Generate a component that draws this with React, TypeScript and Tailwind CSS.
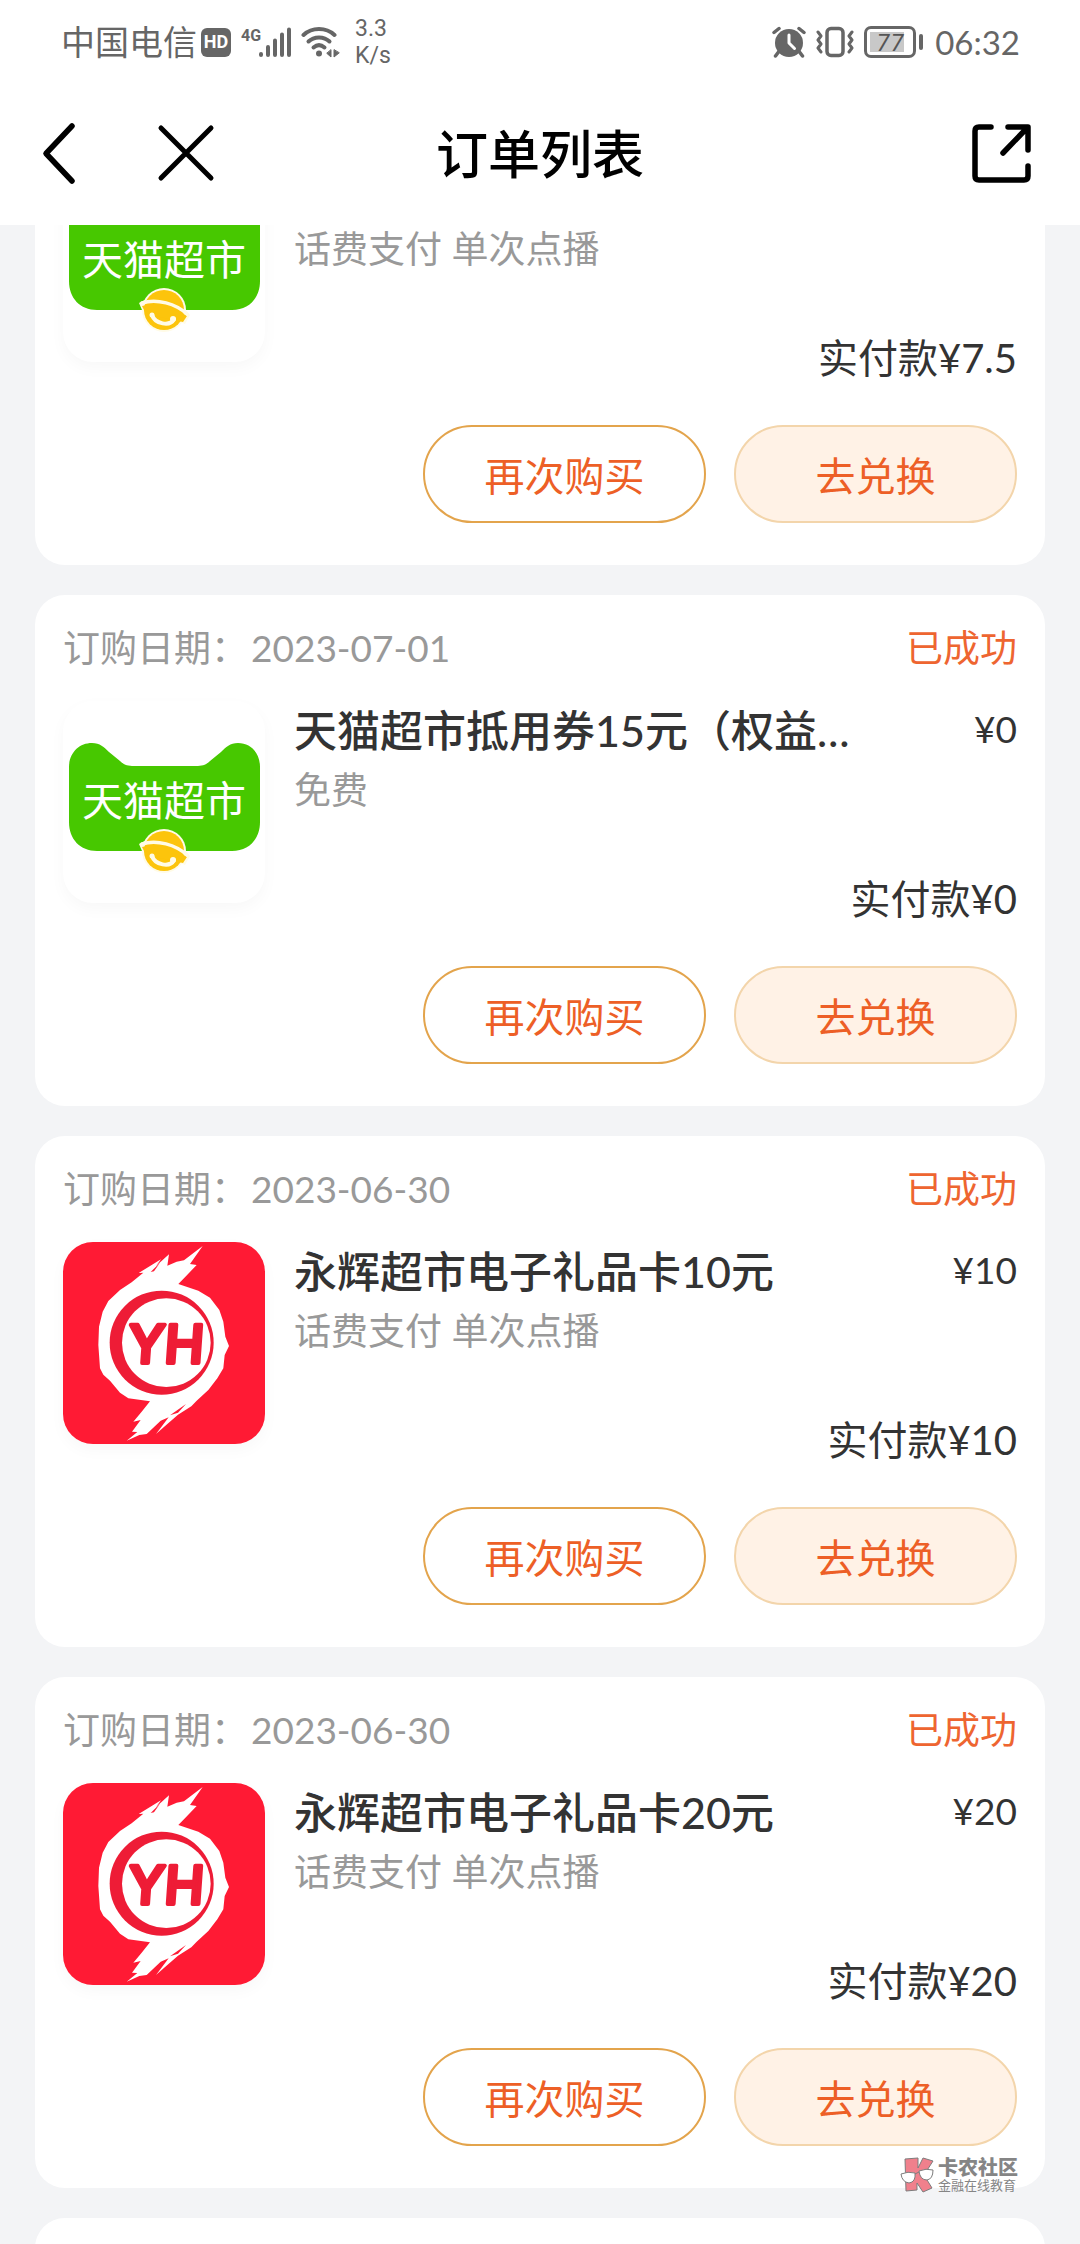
type Brand = 'tmall' | 'yonghui';

interface Order {
  id: string;
  date?: string;
  status?: string;
  brand: Brand;
  title?: string;
  note?: string;
  price?: string;
  paid?: string;
}

const orders: Order[] = [
  { id: 'a', brand: 'tmall', note: '话费支付 单次点播', paid: '7.5' },
  { id: 'b', date: '2023-07-01', status: '已成功', brand: 'tmall', title: '天猫超市抵用券15元（权益…', note: '免费', price: '0', paid: '0' },
  { id: 'c', date: '2023-06-30', status: '已成功', brand: 'yonghui', title: '永辉超市电子礼品卡10元', note: '话费支付 单次点播', price: '10', paid: '10' },
  { id: 'd', date: '2023-06-30', status: '已成功', brand: 'yonghui', title: '永辉超市电子礼品卡20元', note: '话费支付 单次点播', price: '20', paid: '20' },
];

function TmallLogo() {
  return (
    <svg viewBox="0 0 202 202" className="size-full" role="img" aria-label="天猫超市">
      <path
        d="M6 66C6 52 16 42 29 42C37 42 41 46 46 51L57 60C61 64 65 65 71 65H133C139 65 143 64 147 60L158 51C163 46 167 42 175 42C188 42 197 52 197 66V121C197 138 186 150 169 150H34C17 150 6 138 6 121Z"
        fill="#47c800"
      />
      <text x="101" y="115" textAnchor="middle" fontSize="41" fontWeight="400" fill="#fff">
        天猫超市
      </text>
      <circle cx="101" cy="150" r="22" fill="#fffbe6" />
      <path d="M76 143C92 132 116 139 127 155L122 164C105 156 92 152 79 150Z" fill="#fffbe6" />
      <circle cx="101" cy="150" r="20" fill="#fcc40c" />
      <path d="M79 146C94 142 112 148 124 156L120 162L83 154Z" fill="#fcc40c" />
      <path d="M79 143C94 138 113 144 124 154" fill="none" stroke="#fffbe6" strokeWidth="3.500" strokeLinecap="round" />
      <path d="M89 155C92 164 107 167 111 159" fill="none" stroke="#fffbe6" strokeWidth="4" strokeLinecap="round" />
      <circle cx="89" cy="155" r="2.500" fill="#fffbe6" />
      <circle cx="110" cy="159" r="3" fill="#fffbe6" />
    </svg>
  );
}

function YonghuiLogo() {
  return (
    <svg viewBox="39 36 606 606" className="size-full" role="img" aria-label="永辉超市">
      <rect x="39" y="36" width="606" height="606" fill="#ff1a34" />
      <path
        d="M458 48L402 91L380 95L352 107L357 73L318 108L333 88L266 129L280 128L245 157L210 180L175 213L158 245L147 290L145 345L150 415L160 434L180 452L210 488L235 505L300 514L275 545L250 575L272 570L246 605L262 606L230 632L268 615L290 612L332 572L356 562L318 612L352 582L384 554L424 529L440 512L475 480L502 445L520 415L524 375L537 348L526 320L520 275L508 240L480 203L445 182L385 162L412 134L440 105L420 102Z"
        fill="#fff"
      />
      <path d="M360 556L408 522L384 548ZM330 98L312 124L302 126Z" fill="#ff1a34" />
      <circle cx="335" cy="338" r="156" fill="#ee1c36" />
      <circle cx="349" cy="338" r="133" fill="#fff" />
      <g transform="translate(344 399) skewX(-4)">
        <text
          textAnchor="middle"
          fontFamily="Inter"
          fontWeight="500"
          fontSize="158"
          fill="#ee1c36"
          stroke="#ee1c36"
          strokeWidth="12"
          strokeLinejoin="round"
        >
          YH
        </text>
      </g>
    </svg>
  );
}

function StatusBar() {
  return (
    <div className="flex h-[84px] items-center justify-between pr-[60px] pl-[61px] text-[#666]">
      <div className="flex items-center">
        <span className="text-[34px] leading-[40px]">中国电信</span>
        <span className="ml-[4px] flex h-[29px] w-[30px] items-center justify-center rounded-[6px] bg-[#666] font-[Roboto] text-[18px] leading-none font-bold text-white">
          HD
        </span>
        <svg viewBox="0 0 52 32" className="ml-[10px] h-[32px] w-[52px]" role="img" aria-label="4G">
          <text x="0" y="15" fontFamily="Roboto" fontSize="16" fontWeight="700" fill="#666">
            4G
          </text>
          <g stroke="#666" strokeWidth="4" strokeLinecap="round">
            <path d="M20 28V29M27 21V29M34 14.500V29M41 8.500V29M48 3.500V29" />
          </g>
        </svg>
        <svg viewBox="0 0 40 32" className="ml-[8px] h-[32px] w-[40px]" fill="none" stroke="#666" strokeLinecap="round" aria-hidden="true">
          <path d="M2.500 9C11 1 25 1 33.500 9" strokeWidth="4" />
          <path d="M7.500 15.500C13 10 23 10 28.500 15.500" strokeWidth="4" />
          <path d="M12.500 21.500C16 18.500 20 18.500 23.500 21.500" strokeWidth="4" />
          <circle cx="18" cy="27.500" r="3" fill="#666" stroke="none" />
          <path d="M30 24V31L26 27.500ZM33 24V31L38 27Z" fill="#666" stroke="#666" strokeWidth="1" />
        </svg>
        <span className="ml-[14px] flex flex-col font-[Roboto] text-[23px] leading-[27px]">
          <span>3.3</span>
          <span>K/s</span>
        </span>
      </div>
      <div className="flex items-center">
        <svg viewBox="0 0 34 32" className="h-[32px] w-[34px]" aria-hidden="true">
          <circle cx="17" cy="17" r="14" fill="#666" />
          <path d="M2 6.500L7 2.500M32 6.500L27 2.500M6.500 26L3.500 30M27.500 26L30.500 30" stroke="#666" strokeWidth="3.500" strokeLinecap="round" />
          <path d="M17 9V17L22.500 22.500" stroke="#fff" strokeWidth="3" fill="none" strokeLinecap="round" strokeLinejoin="round" />
        </svg>
        <svg viewBox="0 0 38 32" className="ml-[10px] h-[32px] w-[38px]" fill="none" stroke="#666" strokeWidth="3.500" aria-hidden="true">
          <rect x="11" y="2.500" width="16" height="27" rx="4" />
          <path d="M2 6L5 10L2 14L5 18L2 22L5 26M36 6L33 10L36 14L33 18L36 22L33 26" strokeLinejoin="round" strokeLinecap="round" strokeWidth="3" />
        </svg>
        <span className="ml-[10px] flex h-[32px] w-[52px] rounded-[7px] border-[3px] border-[#666] p-[3px]">
          <span className="flex w-[34px] items-center justify-end bg-[#c8c8c8] text-[24px] leading-none text-[#555] italic">77</span>
        </span>
        <span className="ml-[3px] h-[16px] w-[4px] rounded-[2px] bg-[#666]" />
        <time className="ml-[12px] text-[33px] leading-[40px]">06:32</time>
      </div>
    </div>
  );
}

function NavBar() {
  return (
    <header className="grid h-[141px] grid-cols-[1fr_auto_1fr] items-center px-[40px] pb-[2px]">
      <div className="flex items-center">
        <button type="button" aria-label="返回" className="h-[64px] w-[40px]">
          <svg viewBox="0 0 40 64" fill="none" stroke="#000" strokeWidth="5.500" strokeLinecap="round" strokeLinejoin="round">
            <path d="M32 4L6 31.500L32 59" />
          </svg>
        </button>
        <button type="button" aria-label="关闭" className="ml-[74px] h-[64px] w-[64px]">
          <svg viewBox="0 0 64 64" fill="none" stroke="#000" strokeWidth="5" strokeLinecap="round">
            <path d="M7 6L57 56M57 6L7 56" />
          </svg>
        </button>
      </div>
      <h1 className="text-[52px] leading-[60px] font-medium text-black">订单列表</h1>
      <button type="button" aria-label="分享" className="mr-[7px] h-[64px] w-[64px] justify-self-end">
        <svg viewBox="0 0 64 64" fill="none" stroke="#000" strokeWidth="5.500" strokeLinecap="round" strokeLinejoin="round">
          <path d="M22 5H10Q6 5 6 9V54Q6 58 10 58H55Q59 58 59 54V44M39 5H59V28M58 6L34 31" />
        </svg>
      </button>
    </header>
  );
}

function OrderCard({ order }: { order: Order }) {
  return (
    <article className="shrink-0 rounded-[30px] bg-white px-[28px] pb-[42px]">
      <div className="flex h-[106px] items-center justify-between text-[37px] text-[#999]">
        {order.date && (
          <p>
            订购日期：<time className="ml-[3px]">{order.date}</time>
          </p>
        )}
        {order.status && <p className="text-[#ee6530]">{order.status}</p>}
      </div>
      <div className="flex gap-[29px]">
        <div className="size-[202px] shrink-0 overflow-hidden rounded-[30px] bg-white shadow-[0_6px_16px_rgba(0,0,0,0.03)]">
          {order.brand === 'tmall' ? <TmallLogo /> : <YonghuiLogo />}
        </div>
        <div className="min-w-0 flex-1 text-[#333]">
          <div className="flex h-[60px] items-center justify-between">
            {order.title && <h2 className="truncate text-[43px] leading-[60px] font-medium">{order.title}</h2>}
            {order.price && <span className="pb-[4px] text-[37px]">¥{order.price}</span>}
          </div>
          <p className="text-[37px] leading-[58px] text-[#999]">{order.note}</p>
          <p className="mt-[50px] text-right text-[40px] leading-[60px]">实付款¥{order.paid}</p>
        </div>
      </div>
      <div className="mt-[37px] flex justify-end gap-[28px] text-[40px] text-[#ed5f26]">
        <button type="button" className="h-[98px] w-[283px] rounded-full border-2 border-[#e3a44c] pt-[3px]">
          再次购买
        </button>
        <button type="button" className="h-[98px] w-[283px] rounded-full border-2 border-[#f3d5ab] bg-[#fff2e6] pt-[3px]">
          去兑换
        </button>
      </div>
    </article>
  );
}

function Watermark() {
  return (
    <div className="absolute right-[62px] bottom-[51px] flex items-center gap-[4px] text-[#858585]">
      <svg viewBox="0 0 34 36" className="h-[36px] w-[34px]" stroke="#7d7d7d" strokeWidth="1" strokeLinejoin="round" aria-hidden="true">
        <path d="M5 2L18 1L18 11L23 1L33 4L24 18L32 31L23 35L17 26L17 33L6 34Z" fill="#f0808c" />
        <path d="M1 17Q8 14 15 16Q16 25 9 26Q2 25 1 17ZM19 14Q26 11 33 13Q33 22 27 23Q20 23 19 14Z" fill="#fff" />
        <path d="M15 17L19 15" />
      </svg>
      <div className="flex flex-col">
        <span className="text-[20px] leading-[21px] font-black">卡农社区</span>
        <span className="text-[13px] leading-[15px]">金融在线教育</span>
      </div>
    </div>
  );
}

export default function App() {
  return (
    <div className="relative flex h-screen flex-col overflow-hidden bg-[#f3f4f6] font-[Lato,'Noto_Sans_CJK_SC',sans-serif]">
      <div className="z-10 shrink-0 bg-white">
        <StatusBar />
        <NavBar />
      </div>
      <main className="min-h-0 flex-1 overflow-hidden px-[35px]">
        <div className="-mt-[171px] flex flex-col gap-[30px]">
          {orders.map((order) => (
            <OrderCard key={order.id} order={order} />
          ))}
          <div className="h-[106px] rounded-t-[30px] bg-white" />
        </div>
      </main>
      <Watermark />
    </div>
  );
}
